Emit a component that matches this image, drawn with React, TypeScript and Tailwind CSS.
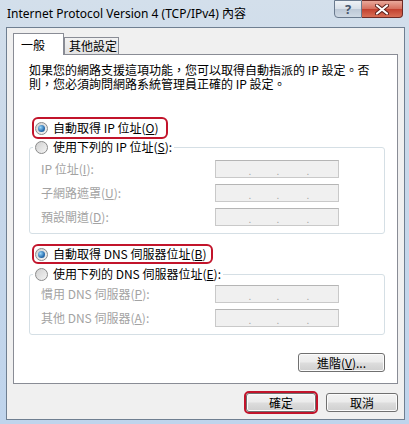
import React from "react";

const cjk = "font-['Noto_Sans_CJK_TC','Noto_Sans',sans-serif]";

type RadioProps = { checked?: boolean };

const Radio = ({ checked }: RadioProps) => (
  <span className="w-[13px] h-[13px] shrink-0 rounded-full border border-[#8a8a8a] bg-[linear-gradient(135deg,#d0d0d0,#f4f4f4)] flex items-center justify-center">
    {checked && (
      <span className="w-[7px] h-[7px] rounded-full bg-[radial-gradient(circle_at_35%_35%,#9ad8fb,#2a6fb0_60%,#1a4f86)]" />
    )}
  </span>
);

const IpBox = () => (
  <div className="w-[124px] h-[18px] border border-[#c9c9c9] border-t-[#b5b5b5] bg-[#f0f0f0] flex items-end pb-[1px] text-[#a8a8a8] text-[10px] leading-[10px]">
    <span className="w-[31px]" />
    <span className="w-[6px] text-center">.</span>
    <span className="w-[22px]" />
    <span className="w-[6px] text-center">.</span>
    <span className="w-[24px]" />
    <span className="w-[6px] text-center">.</span>
  </div>
);

const FieldRow = ({ children }: { children: React.ReactNode }) => (
  <div className="flex items-center h-[18px]">
    <span className="w-[174px] text-[#a3a3a3] text-[12px] leading-[14px]">{children}</span>
    <IpBox />
  </div>
);

const WinButton = ({ children, className }: { children: React.ReactNode; className?: string }) => (
  <button
    className={
      "h-[19px] rounded-[3px] border border-[#707070] bg-[linear-gradient(#f3f3f3_0%,#ebebeb_48%,#dddddd_52%,#cfcfcf_100%)] shadow-[inset_0_0_0_1px_#fbfbfb] text-[12px] leading-[14px] text-black flex items-center justify-center " +
      (className ?? "")
    }
  >
    {children}
  </button>
);

export default function App() {
  return (
    <div className={"w-[409px] h-[424px] flex flex-col overflow-hidden bg-[linear-gradient(180deg,#d3dfeb_0%,#c8d8ea_40%,#bfd4ec_100%)] " + cjk}>
      {/* title bar */}
      <div className="h-[27px] shrink-0 flex justify-between">
        <div className="pl-[7px] pt-[6px] text-[12px] leading-[15px] text-black font-['Noto_Sans','Noto_Sans_CJK_TC',sans-serif] whitespace-nowrap">
          Internet Protocol Version 4 (TCP/IPv4) 內容
        </div>
        <div className="flex pr-[6px] h-[18px]">
          <div className="w-[28px] h-[18px] rounded-bl-[4px] border border-[#6a7a8e] bg-[linear-gradient(#eef2f6_0%,#d7dfe8_50%,#bcc8d6_51%,#cfd9e4_100%)] flex items-center justify-center text-[13px] leading-none font-bold text-[#46566b] font-['Noto_Sans',sans-serif]">
            ?
          </div>
          <div className="w-[41px] h-[18px] rounded-br-[4px] border border-l-0 border-[#6e2a25] bg-[linear-gradient(#e9a99b_0%,#d6705f_48%,#c2412f_52%,#d86e55_100%)] flex items-center justify-center">
            <svg width="14" height="11" viewBox="0 0 14 11">
              <path d="M2 1.5 L12 9.5 M12 1.5 L2 9.5" stroke="#5a1f1a" strokeWidth="4" strokeLinecap="round" />
              <path d="M2 1.5 L12 9.5 M12 1.5 L2 9.5" stroke="#ffffff" strokeWidth="2.2" strokeLinecap="round" />
            </svg>
          </div>
        </div>
      </div>

      {/* client area */}
      <div className="ml-[6px] mr-[4px] mb-[4px] flex-1 border border-[#6f7f91] bg-[#f0f0f0] flex flex-col px-[6px] pt-[5px]">
        {/* tabs */}
        <div className="flex items-end h-[21px]">
          <div className="relative z-10 -mb-[1px] h-[22px] w-[51px] border border-b-0 border-[#898c95] bg-white pl-[7px] pt-[4px] text-[12px] leading-[14px] text-black">
            一般
          </div>
          <div className="h-[17px] w-[55px] border border-b-0 border-[#898c95] bg-[linear-gradient(#f2f2f2,#e3e3e3)] pl-[4px] pt-[1px] text-[12px] leading-[14px] text-black">
            其他設定
          </div>
        </div>

        {/* tab panel */}
        <div className="border border-[#898c95] bg-white flex flex-col pt-[8px] pb-[11px]">
          <p className="pl-[15px] text-[12px] leading-[14px] text-black whitespace-nowrap">
            如果您的網路支援這項功能，您可以取得自動指派的 IP 設定。否
            <br />
            則，您必須詢問網路系統管理員正確的 IP 設定。
          </p>

          <div className="mt-[26px] ml-[18px] w-[136px] h-[22px] rounded-[6px] border-2 border-[#c2142b] flex items-center pl-[1px] gap-[5px]">
            <Radio checked />
            <span className="text-[12px] leading-[14px] text-black whitespace-nowrap">
              自動取得 IP 位址(<u>O</u>)
            </span>
          </div>

          <fieldset className="ml-[15px] w-[356px] border border-[#d5dfe5] rounded-[3px] px-0">
            <legend className="ml-[3px] px-[2px] h-[16px] flex items-center gap-[5px] bg-white">
              <Radio />
              <span className="text-[12px] leading-[14px] text-black whitespace-nowrap">
                使用下列的 IP 位址(<u>S</u>):
              </span>
            </legend>
            <div className="pt-[5px] pb-[7px] pl-[11px] flex flex-col gap-[6px]">
              <FieldRow>
                IP 位址(<u>I</u>):
              </FieldRow>
              <FieldRow>
                子網路遮罩(<u>U</u>):
              </FieldRow>
              <FieldRow>
                預設閘道(<u>D</u>):
              </FieldRow>
            </div>
          </fieldset>

          <div className="mt-[10px] ml-[18px] w-[181px] h-[20px] rounded-[6px] border-2 border-[#c2142b] flex items-center pl-[1px] gap-[5px]">
            <Radio checked />
            <span className="text-[12px] leading-[14px] text-black whitespace-nowrap">
              自動取得 DNS 伺服器位址(<u>B</u>)
            </span>
          </div>

          <fieldset className="mt-[2px] ml-[15px] w-[356px] border border-[#d5dfe5] rounded-[3px] px-0">
            <legend className="ml-[3px] px-[2px] h-[16px] flex items-center gap-[5px] bg-white">
              <Radio />
              <span className="text-[12px] leading-[14px] text-black whitespace-nowrap">
                使用下列的 DNS 伺服器位址(<u>E</u>):
              </span>
            </legend>
            <div className="pt-[3px] pb-[7px] pl-[11px] flex flex-col gap-[6px]">
              <FieldRow>
                慣用 DNS 伺服器(<u>P</u>):
              </FieldRow>
              <FieldRow>
                其他 DNS 伺服器(<u>A</u>):
              </FieldRow>
            </div>
          </fieldset>

          <div className="mt-[18px] flex justify-end pr-[12px]">
            <WinButton className="w-[87px]">
              進階(<u>V</u>)...
            </WinButton>
          </div>
        </div>

        {/* dialog buttons */}
        <div className="mt-[9px] flex justify-end gap-[10px]">
          <WinButton className="w-[70px] border-[#3c7fb1] bg-[linear-gradient(#f1f8fd_0%,#e3f2fb_48%,#cde9f9_52%,#b3dcf3_100%)] outline-2 outline-solid outline-[#c2142b] outline-offset-[0px]">
            確定
          </WinButton>
          <WinButton className="w-[72px]">取消</WinButton>
        </div>
      </div>
    </div>
  );
}
